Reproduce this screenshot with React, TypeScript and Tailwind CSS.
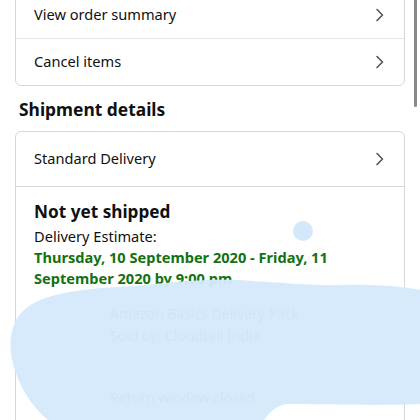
import React from 'react';

const Chevron = () => (
  <svg width="10" height="14" viewBox="0 0 10 14" className="shrink-0">
    <path d="M2 1.5 L7.5 7 L2 12.5" fill="none" stroke="#555" strokeWidth="1.6" strokeLinecap="round" strokeLinejoin="round" />
  </svg>
);

function Row({ label, h }: { label: string; h: string }) {
  return (
    <div className={`flex items-center justify-between pl-[18px] pr-[19px] ${h}`}>
      <span className="text-[14.6px] text-[#0f1111]">{label}</span>
      <Chevron />
    </div>
  );
}

export default function App() {
  return (
    <div className="relative w-[420px] h-[420px] overflow-hidden bg-white" style={{ fontFamily: '"Noto Sans", "Open Sans", sans-serif' }}>
      <div className="-mt-[10px] px-[15px]">
        {/* Order actions card */}
        <div className="border border-[#d5d9d9] rounded-md">
          <Row label="View order summary" h="h-[47px]" />
          <div className="border-t border-[#e3e6e6]" />
          <Row label="Cancel items" h="h-[46px]" />
        </div>

        <h2 className="mt-[12px] mb-[10px] pl-[4px] text-[17.4px] font-bold text-[#0f1111] leading-[23px]">Shipment details</h2>

        {/* Shipment card */}
        <div className="border border-[#d5d9d9] rounded-md h-[320px]">
          <Row label="Standard Delivery" h="h-[54px]" />
          <div className="border-t border-[#d5d9d9]" />
          <div className="pl-[18px] pr-[19px] pt-[12px]">
            <div className="text-[17.2px] font-bold text-[#0f1111] leading-[26px]">Not yet shipped</div>
            <div className="text-[14.6px] text-[#0f1111] leading-[21px] mt-[1px]">Delivery Estimate:</div>
            <div className="text-[14.6px] font-bold text-[#127212] leading-[21px]">
              Thursday, 10 September 2020 - Friday, 11 September 2020 by 9:00 pm
            </div>
            <div className="flex gap-4 mt-[14px]">
              <div className="w-[60px] h-[64px] bg-[#eaeded] rounded-sm" />
              <div className="flex-1 text-[14px] text-[#565959] leading-[22px]">
                <div>Amazon Basics Delivery Pack</div>
                <div>Sold by: Cloudtail India</div>
                <div className="mt-[40px]">Return window closed</div>
              </div>
            </div>
          </div>
        </div>
      </div>

      {/* scrollbar */}
      <div className="absolute right-[3px] top-0 w-[3px] h-[107px] bg-[#8a8a8a] rounded-b-sm" />

      {/* blue scribble overlay */}
      <svg className="absolute inset-0 pointer-events-none" width="420" height="420" viewBox="0 0 420 420">
        <circle cx="303" cy="231" r="10" fill="#d4e8fb" />
        <path
          d="M22 312 C40 292 90 288 135 286 C175 282 205 279 235 280 C280 282 310 286 340 285 C380 284 405 287 420 290 L420 404 C380 406 320 404 285 404 C272 408 268 415 264 420 L48 420 C30 405 18 385 12 360 C8 340 12 322 22 312 Z"
          fill="#d4e9fc"
          fillOpacity="0.96"
        />
      </svg>
    </div>
  );
}
